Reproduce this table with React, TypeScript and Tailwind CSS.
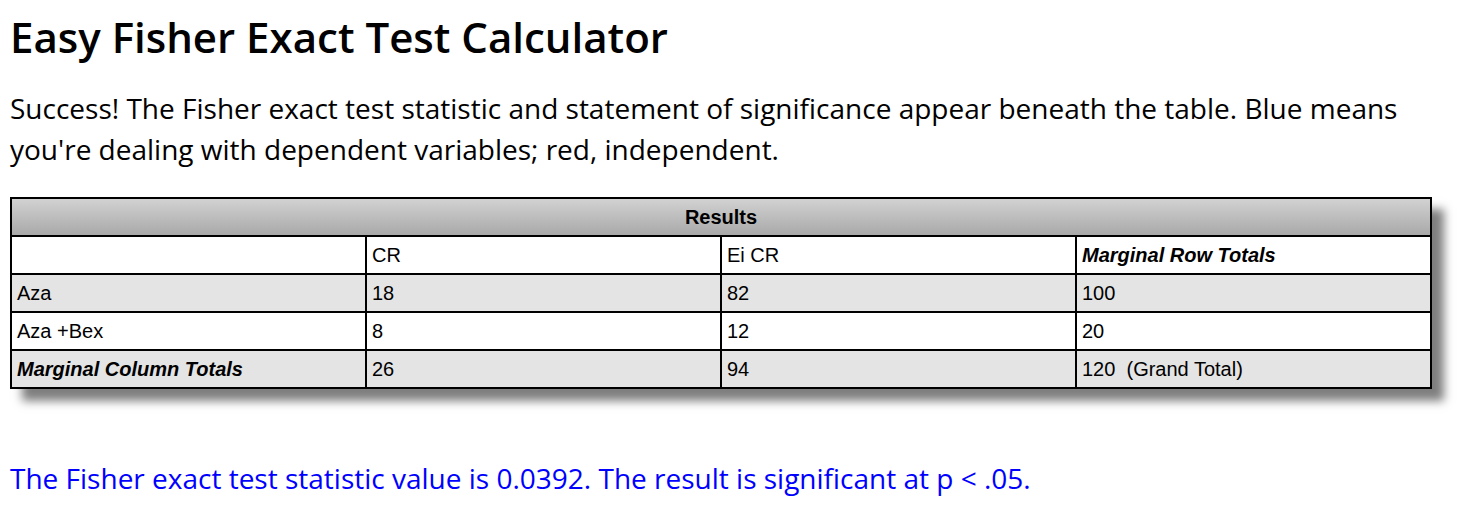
export default function App() {
  const rows = [
    { label: "Aza", a: "18", b: "82", total: "100", shade: true },
    { label: "Aza +Bex", a: "8", b: "12", total: "20", shade: false },
  ];

  const cell = "border-2 border-black px-[5px] h-[38px] align-middle text-left";

  return (
    <div className="min-h-screen bg-white px-[10px] pt-[12px] text-black font-['Open_Sans',sans-serif]">
      <h1 className="text-[42px] leading-[50px] font-semibold">
        Easy Fisher Exact Test Calculator
      </h1>

      <p className="mt-[26px] text-[28px] leading-[41px]">
        Success! The Fisher exact test statistic and statement of significance appear beneath the table. Blue means
        you're dealing with dependent variables; red, independent.
      </p>

      <table className="mt-[27px] w-[1422px] border-collapse border-2 border-black shadow-[12px_12px_9px_#7f7f7f] font-['Liberation_Sans',Arial,sans-serif] text-[20px] leading-[23px] table-fixed">
        <thead>
          <tr>
            <th
              colSpan={4}
              className="border-2 border-black h-[38px] bg-gradient-to-b from-[#d2d2d2] to-[#a9a9a9] text-center font-bold"
            >
              Results
            </th>
          </tr>
        </thead>
        <tbody>
          <tr className="bg-white">
            <td className={`${cell} w-[357px]`}></td>
            <td className={`${cell} w-[355px]`}>CR</td>
            <td className={`${cell} w-[354px]`}>Ei CR</td>
            <td className={`${cell} font-bold italic`}>Marginal Row Totals</td>
          </tr>
          {rows.map((r) => (
            <tr key={r.label} className={r.shade ? "bg-[#e4e4e4]" : "bg-white"}>
              <td className={cell}>{r.label}</td>
              <td className={cell}>{r.a}</td>
              <td className={cell}>{r.b}</td>
              <td className={cell}>{r.total}</td>
            </tr>
          ))}
          <tr className="bg-[#e4e4e4]">
            <td className={`${cell} font-bold italic`}>Marginal Column Totals</td>
            <td className={cell}>26</td>
            <td className={cell}>94</td>
            <td className={`${cell} whitespace-pre`}>120  (Grand Total)</td>
          </tr>
        </tbody>
      </table>

      <p className="mt-[69px] text-[28px] leading-[41px] text-[#0000ff]">
        The Fisher exact test statistic value is 0.0392. The result is significant at p &lt; .05.
      </p>
    </div>
  );
}
